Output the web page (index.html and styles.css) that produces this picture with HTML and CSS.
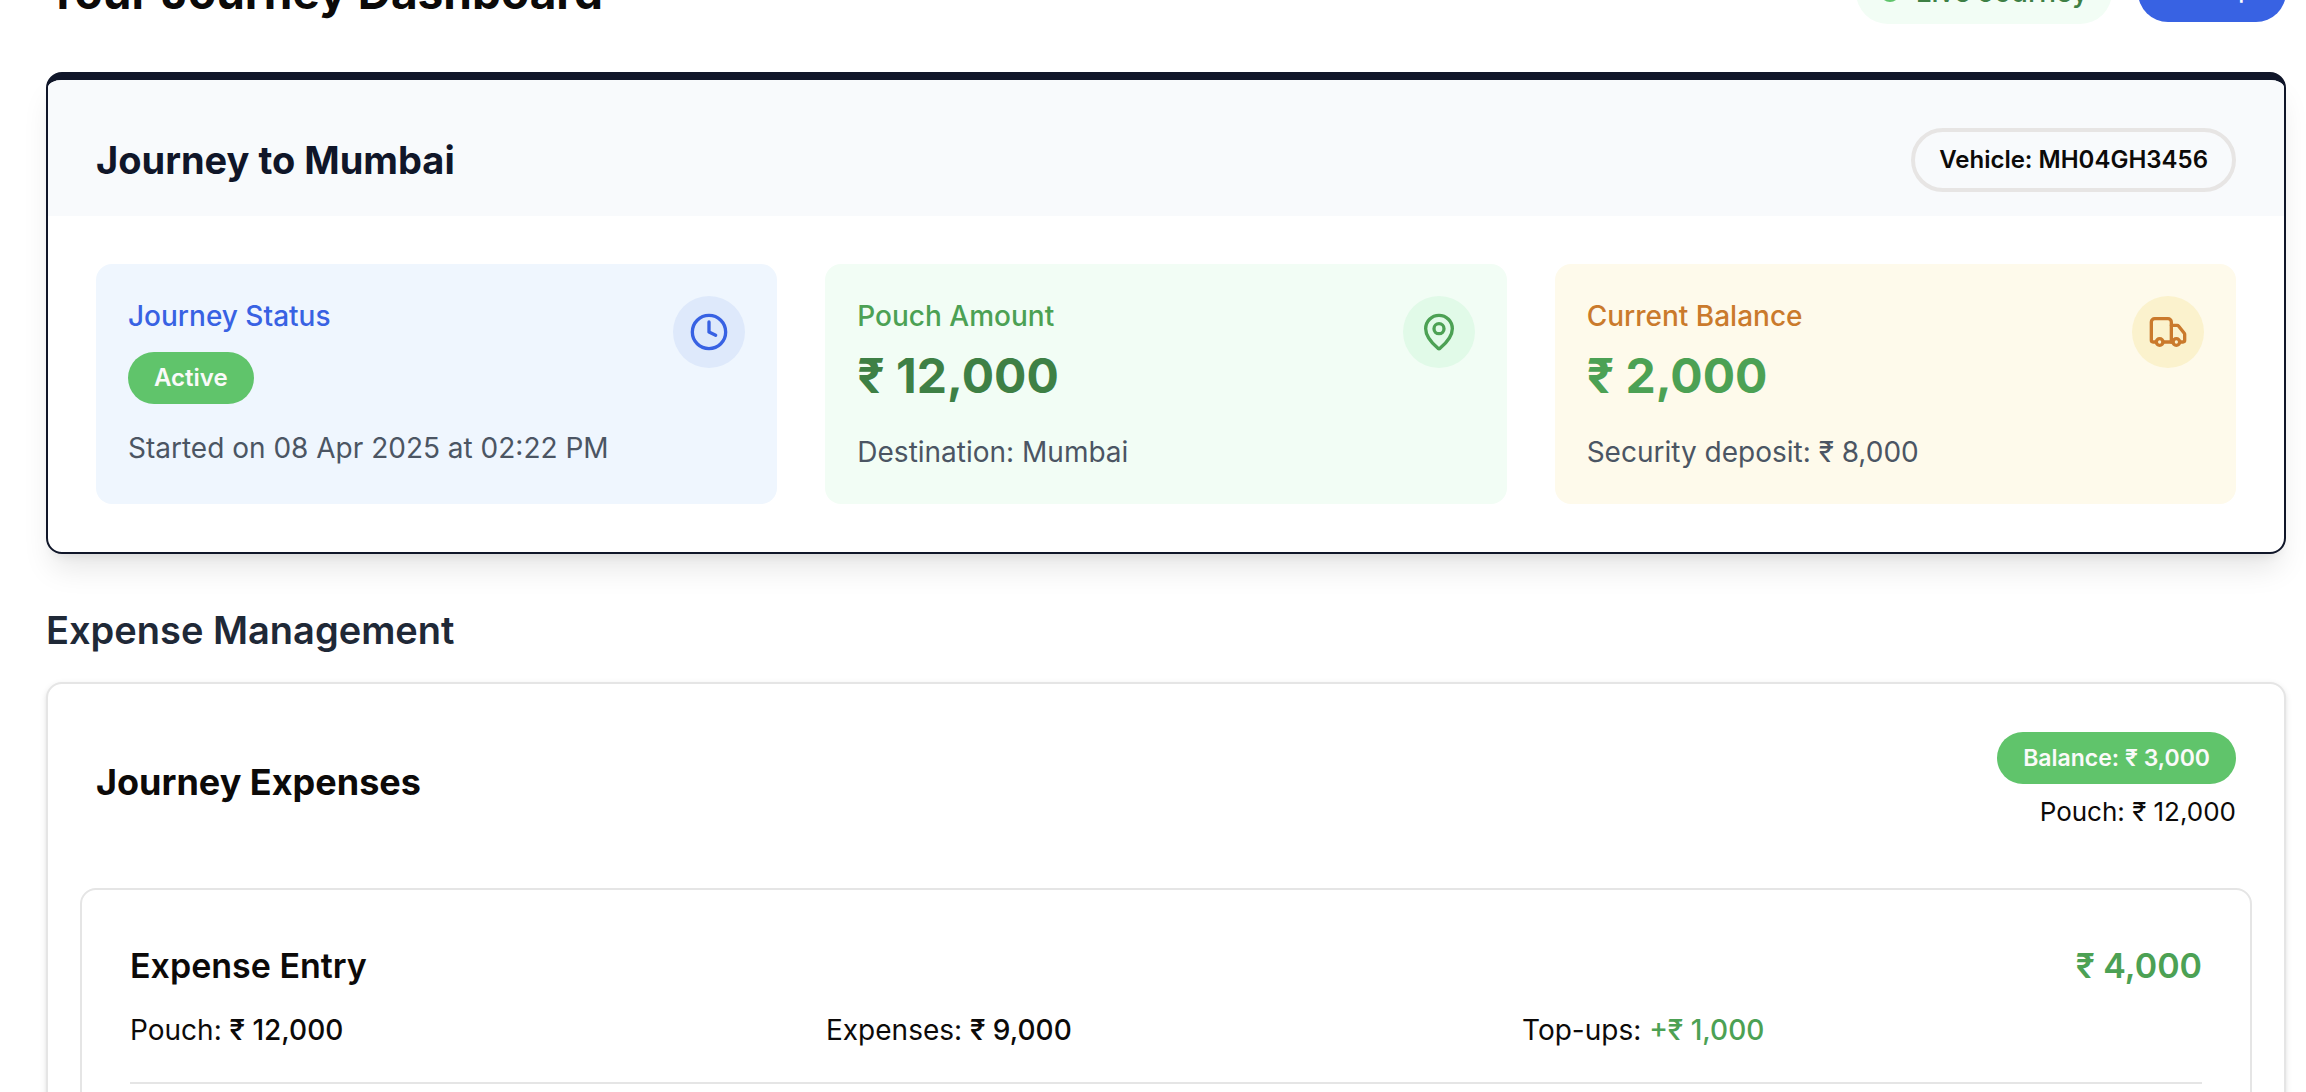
FILE: index.html
```html
<!DOCTYPE html>
<html lang="en">
<head>
<meta charset="utf-8">
<title>Your Journey Dashboard</title>
<link rel="stylesheet" href="styles.css">
</head>
<body>
<main class="page">
  <header class="topbar">
    <h1 class="page-title">Your Journey Dashboard</h1>
    <div class="topbar-actions">
      <span class="live"><span class="live-dot"></span>Live Journey</span>
      <button class="map-button" type="button">
        <svg viewBox="0 0 24 24" aria-hidden="true"><path d="M20 10c0 4.993-5.539 10.193-7.399 11.799a1 1 0 0 1-1.202 0C9.539 20.193 4 14.993 4 10a8 8 0 0 1 16 0"/><circle cx="12" cy="10" r="3"/></svg>
        Map
      </button>
    </div>
  </header>

  <section class="card journey">
    <div class="journey-head">
      <h2 class="title journey-title">Journey to Mumbai</h2>
      <span class="vehicle">Vehicle: MH04GH3456</span>
    </div>
    <div class="tiles">
      <article class="tile tile-blue">
        <div>
          <p class="tile-label">Journey Status</p>
          <span class="badge status">Active</span>
          <p class="tile-note">Started on 08 Apr 2025 at 02:22 PM</p>
        </div>
        <span class="tile-icon">
          <svg viewBox="0 0 24 24" aria-hidden="true"><circle cx="12" cy="12" r="10"/><polyline points="12 6 12 12 16 14"/></svg>
        </span>
      </article>
      <article class="tile tile-green">
        <div>
          <p class="tile-label">Pouch Amount</p>
          <p class="tile-amount">₹ 12,000</p>
          <p class="tile-note">Destination: Mumbai</p>
        </div>
        <span class="tile-icon">
          <svg viewBox="0 0 24 24" aria-hidden="true"><path d="M20 10c0 4.993-5.539 10.193-7.399 11.799a1 1 0 0 1-1.202 0C9.539 20.193 4 14.993 4 10a8 8 0 0 1 16 0"/><circle cx="12" cy="10" r="3"/></svg>
        </span>
      </article>
      <article class="tile tile-amber">
        <div>
          <p class="tile-label">Current Balance</p>
          <p class="tile-amount">₹ 2,000</p>
          <p class="tile-note">Security deposit: ₹ 8,000</p>
        </div>
        <span class="tile-icon">
          <svg viewBox="0 0 24 24" aria-hidden="true"><path d="M14 18V6a2 2 0 0 0-2-2H4a2 2 0 0 0-2 2v11a1 1 0 0 0 1 1h2"/><path d="M15 18H9"/><path d="M19 18h2a1 1 0 0 0 1-1v-3.65a1 1 0 0 0-.22-.624l-3.48-4.35A1 1 0 0 0 17.52 8H14"/><circle cx="17" cy="18" r="2"/><circle cx="7" cy="18" r="2"/></svg>
        </span>
      </article>
    </div>
  </section>

  <h2 class="title section-title">Expense Management</h2>

  <section class="card expenses">
    <div class="expenses-head">
      <h3 class="title expenses-title">Journey Expenses</h3>
      <div class="totals">
        <span class="badge balance">Balance: ₹ 3,000</span>
        <p class="pouch">Pouch: ₹ 12,000</p>
      </div>
    </div>
    <div class="entry">
      <div class="entry-head">
        <h4 class="entry-title">Expense Entry</h4>
        <span class="entry-amount">₹ 4,000</span>
      </div>
      <div class="entry-stats">
        <p>Pouch: <b>₹ 12,000</b></p>
        <p>Expenses: <b>₹ 9,000</b></p>
        <p>Top-ups: <b class="plus">+₹ 1,000</b></p>
      </div>
      <div class="entry-form"></div>
    </div>
  </section>
</main>
</body>
</html>
```
FILE: styles.css
```css
* { box-sizing: border-box; margin: 0; }

body {
  background: #fff;
  color: #0c0a09;
  font-family: Inter, "Liberation Sans", sans-serif;
  font-size: 28px;
  line-height: 40px;
}

/* The page is scrolled so that the top bar is partly out of view. */
.page { margin-top: -40px; padding: 0 20px 0 46px; }

.topbar {
  display: flex;
  align-items: center;
  justify-content: space-between;
  height: 64px;
  margin-bottom: 48px;
}
.page-title { font-size: 46px; line-height: 64px; font-weight: 700; }
.topbar-actions { display: flex; align-items: center; gap: 26px; }
.live {
  display: flex;
  align-items: center;
  gap: 16px;
  padding: 12px 24px;
  border-radius: 32px;
  background: #f2fdf5;
  color: #3e8045;
  font-weight: 500;
}
.live-dot { width: 20px; height: 20px; border-radius: 50%; background: #60c46b; }
.map-button {
  display: flex;
  align-items: center;
  justify-content: center;
  gap: 12px;
  min-width: 148px;
  height: 60px;
  padding: 0 32px 4px;
  border: 0;
  border-radius: 30px;
  background: #3862e3;
  color: #fff;
  font: 500 24px/32px Inter, "Liberation Sans", sans-serif;
}
.map-button svg { width: 20px; height: 20px; }

svg {
  display: block;
  fill: none;
  stroke: currentColor;
  stroke-width: 2;
  stroke-linecap: round;
  stroke-linejoin: round;
}

.card { border: 2px solid #e5e5e5; border-radius: 16px; background: #fff; }
.title { font-size: 38px; line-height: 56px; font-weight: 700; }

.journey {
  overflow: hidden;
  border-color: #101629;
  border-top-width: 8px;
  box-shadow: 0 20px 30px -6px rgba(0, 0, 0, .1), 0 8px 12px -8px rgba(0, 0, 0, .1);
}
.journey-head {
  display: flex;
  align-items: center;
  justify-content: space-between;
  padding: 48px 48px 24px;
  background: #f8fafc;
}
.journey-title { color: #101629; }
.vehicle {
  padding: 12px 24px;
  border: 4px solid #e7e5e4;
  border-radius: 32px;
  font-size: 24px;
  line-height: 32px;
  font-weight: 600;
}

.tiles {
  display: grid;
  grid-template-columns: repeat(3, 1fr);
  gap: 48px;
  padding: 48px;
}
.tile {
  display: flex;
  align-items: flex-start;
  justify-content: space-between;
  padding: 32px;
  border-radius: 16px;
}
.tile-label { font-weight: 500; }
.tile-amount { margin-top: 8px; font-size: 48px; line-height: 64px; font-weight: 700; }
.tile-note { margin-top: 24px; color: #4b5563; }
.tile-icon { padding: 16px; border-radius: 50%; }
.tile-icon svg { width: 40px; height: 40px; }
.tile-blue { background: #eff6fe; }
.tile-blue .tile-label, .tile-blue .tile-icon { color: #3862e3; }
.tile-blue .tile-icon { background: #dee9fb; }
.tile-green { background: #f2fdf5; }
.tile-green .tile-label, .tile-green .tile-icon { color: #4ca154; }
.tile-green .tile-icon { background: #e1fae8; }
.tile-green .tile-amount { color: #3e8045; }
.tile-amber { background: #fefaeb; }
.tile-amber .tile-label, .tile-amber .tile-icon { color: #ca7a2c; }
.tile-amber .tile-icon { background: #fbf2cd; }
.tile-amber .tile-amount { color: #4ca154; }

.badge {
  display: block;
  width: fit-content;
  padding: 10px 26px;
  border-radius: 26px;
  background: #60c46b;
  color: #fafaf9;
  font-size: 24px;
  line-height: 32px;
  font-weight: 600;
}
.status { margin-top: 16px; }
.balance { font-size: 23px; }

.section-title { margin: 48px 0 24px; color: #1f2937; font-weight: 600; }

.expenses { padding: 0 32px 32px; box-shadow: 0 2px 6px rgba(0, 0, 0, .1), 0 2px 4px -2px rgba(0, 0, 0, .1); }
.expenses-head {
  display: flex;
  align-items: center;
  justify-content: space-between;
  padding: 48px 16px 56px;
}
.expenses-title { font-size: 36px; }
.totals { display: flex; flex-direction: column; align-items: flex-end; gap: 8px; }
.pouch { font-size: 26px; }
.entry { padding: 48px; border: 2px solid #e5e5e5; border-radius: 16px; }
.entry-head { display: flex; align-items: center; justify-content: space-between; }
.entry-title, .entry-amount { font-size: 34px; line-height: 56px; font-weight: 600; }
.entry-amount { color: #4ca154; }
.entry-stats {
  display: grid;
  grid-template-columns: repeat(3, 1fr);
  gap: 16px;
  margin: 16px 0 32px;
}
.entry-stats b { font-weight: 500; }
.entry-stats .plus { color: #4ca154; }
.entry-form { border-top: 2px solid #e5e5e5; }
```
